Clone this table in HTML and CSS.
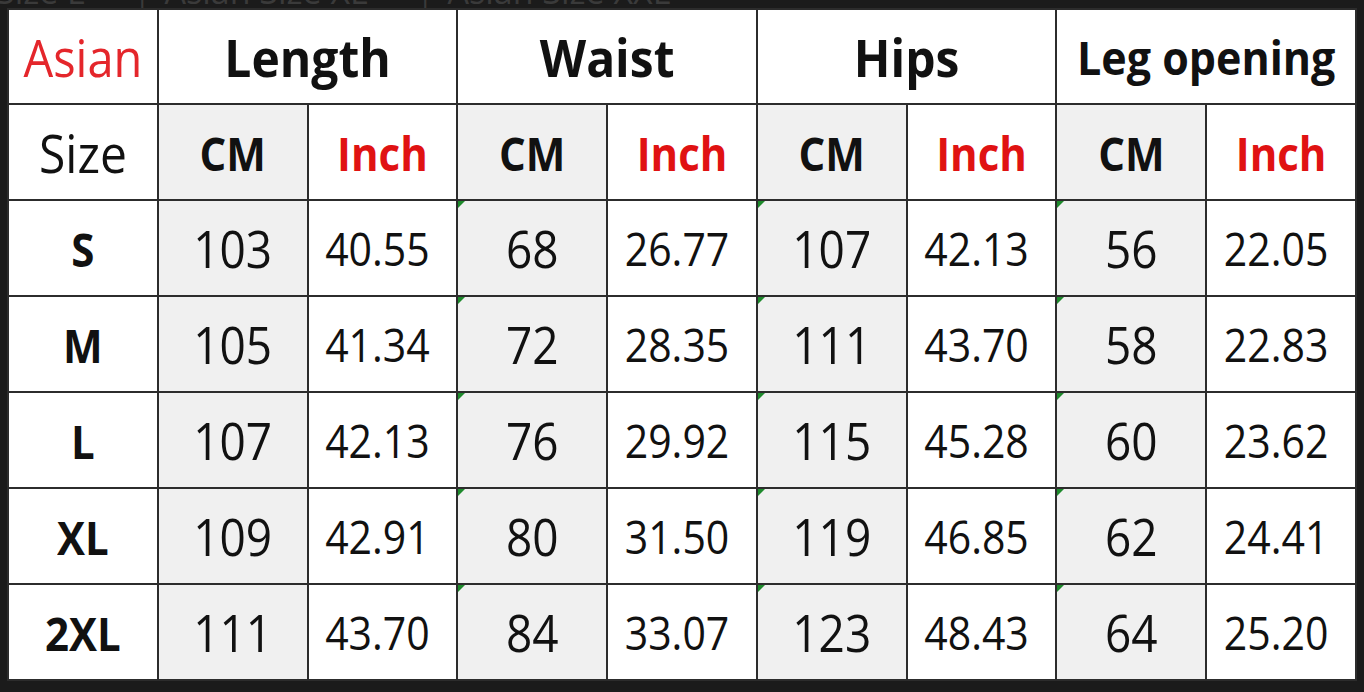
FILE: index.html
```html
<!DOCTYPE html>
<html>
<head>
<meta charset="utf-8">
<link rel="stylesheet" href="styles.css">
</head>
<body>
<div class="strip">
  <div class="strip-text">
    <span class="t1">Size L</span><span class="x">×</span><span class="sep">|</span>
    <span class="t2">Asian Size XL</span><span class="x">×</span><span class="sep">|</span>
    <span class="t3">Asian Size XXL</span><span class="x">×</span>
  </div>
</div>
<div class="chart">
  <div class="cell head red-light"><span class="tx">Asian</span></div>
  <div class="cell head span2 bold"><span class="tx">Length</span></div>
  <div class="cell head span2 bold"><span class="tx">Waist</span></div>
  <div class="cell head span2 bold"><span class="tx">Hips</span></div>
  <div class="cell head span2 bold small"><span class="tx">Leg opening</span></div>

  <div class="cell size-label"><span class="tx">Size</span></div>
  <div class="cell grey unit bold"><span class="tx">CM</span></div>
  <div class="cell unit bold red"><span class="tx">Inch</span></div>
  <div class="cell grey unit bold"><span class="tx">CM</span></div>
  <div class="cell unit bold red"><span class="tx">Inch</span></div>
  <div class="cell grey unit bold"><span class="tx">CM</span></div>
  <div class="cell unit bold red"><span class="tx">Inch</span></div>
  <div class="cell grey unit bold"><span class="tx">CM</span></div>
  <div class="cell unit bold red"><span class="tx">Inch</span></div>

  <div class="cell size bold"><span class="tx">S</span></div>
  <div class="cell grey cm"><span class="tx">103</span></div>
  <div class="cell inch"><span class="tx">40.55</span></div>
  <div class="cell grey cm mark"><span class="tx">68</span></div>
  <div class="cell inch"><span class="tx">26.77</span></div>
  <div class="cell grey cm mark"><span class="tx">107</span></div>
  <div class="cell inch"><span class="tx">42.13</span></div>
  <div class="cell grey cm mark"><span class="tx">56</span></div>
  <div class="cell inch"><span class="tx">22.05</span></div>

  <div class="cell size bold"><span class="tx">M</span></div>
  <div class="cell grey cm"><span class="tx">105</span></div>
  <div class="cell inch"><span class="tx">41.34</span></div>
  <div class="cell grey cm mark"><span class="tx">72</span></div>
  <div class="cell inch"><span class="tx">28.35</span></div>
  <div class="cell grey cm mark"><span class="tx">111</span></div>
  <div class="cell inch"><span class="tx">43.70</span></div>
  <div class="cell grey cm mark"><span class="tx">58</span></div>
  <div class="cell inch"><span class="tx">22.83</span></div>

  <div class="cell size bold"><span class="tx">L</span></div>
  <div class="cell grey cm"><span class="tx">107</span></div>
  <div class="cell inch"><span class="tx">42.13</span></div>
  <div class="cell grey cm mark"><span class="tx">76</span></div>
  <div class="cell inch"><span class="tx">29.92</span></div>
  <div class="cell grey cm mark"><span class="tx">115</span></div>
  <div class="cell inch"><span class="tx">45.28</span></div>
  <div class="cell grey cm mark"><span class="tx">60</span></div>
  <div class="cell inch"><span class="tx">23.62</span></div>

  <div class="cell size bold"><span class="tx">XL</span></div>
  <div class="cell grey cm"><span class="tx">109</span></div>
  <div class="cell inch"><span class="tx">42.91</span></div>
  <div class="cell grey cm mark"><span class="tx">80</span></div>
  <div class="cell inch"><span class="tx">31.50</span></div>
  <div class="cell grey cm mark"><span class="tx">119</span></div>
  <div class="cell inch"><span class="tx">46.85</span></div>
  <div class="cell grey cm mark"><span class="tx">62</span></div>
  <div class="cell inch"><span class="tx">24.41</span></div>

  <div class="cell size bold"><span class="tx">2XL</span></div>
  <div class="cell grey cm"><span class="tx">111</span></div>
  <div class="cell inch"><span class="tx">43.70</span></div>
  <div class="cell grey cm mark"><span class="tx">84</span></div>
  <div class="cell inch"><span class="tx">33.07</span></div>
  <div class="cell grey cm mark"><span class="tx">123</span></div>
  <div class="cell inch"><span class="tx">48.43</span></div>
  <div class="cell grey cm mark"><span class="tx">64</span></div>
  <div class="cell inch"><span class="tx">25.20</span></div>
</div>
</body>
</html>
```

FILE: styles.css
```css
html, body {
  margin: 0;
  padding: 0;
  background: #1b1b1b;
  width: 1364px;
  height: 692px;
  overflow: hidden;
  font-family: "Open Sans", "Noto Sans", sans-serif;
}

.strip {
  height: 8px;
  overflow: hidden;
}

.strip-text {
  display: flex;
  align-items: baseline;
  margin-top: -26px;
  margin-left: -4px;
  font-size: 34px;
  line-height: 34px;
  color: #3a3a3a;
  white-space: nowrap;
}

.strip-text .x {
  margin-left: 16px;
  font-size: 30px;
}

.strip-text .sep {
  margin-left: 16px;
  margin-right: 14px;
  font-size: 30px;
}

.chart {
  margin-left: 7px;
  width: 1350px;
  box-sizing: border-box;
  display: grid;
  grid-template-columns: repeat(9, 1fr);
  grid-template-rows: 93px repeat(6, 94px);
  gap: 2px;
  padding: 2px;
  background: #2c2c2c;
}

.cell {
  position: relative;
  background: #ffffff;
  display: flex;
  align-items: center;
  justify-content: center;
  color: #111111;
  font-size: 44px;
  white-space: nowrap;
}

.cell .tx {
  display: inline-block;
  transform: scaleY(1.1);
}

.span2 {
  grid-column: span 2;
}

.grey {
  background: #f0f0f0;
}

.head {
  font-size: 48px;
}

.bold {
  font-weight: 700;
}

.small {
  font-size: 43px;
}

.red-light {
  color: #e4262b;
  font-size: 47px;
}

.red {
  color: #e01212;
}

.size-label {
  font-size: 48px;
}

.unit {
  font-size: 42px;
}

.size {
  font-size: 42px;
}

.cm {
  font-size: 46px;
}

.inch {
  font-size: 41px;
  padding-right: 10px;
}

.mark::before {
  content: "";
  position: absolute;
  left: 0;
  top: 0;
  width: 0;
  height: 0;
  border-top: 7px solid #1e8a2c;
  border-right: 7px solid transparent;
}
```
